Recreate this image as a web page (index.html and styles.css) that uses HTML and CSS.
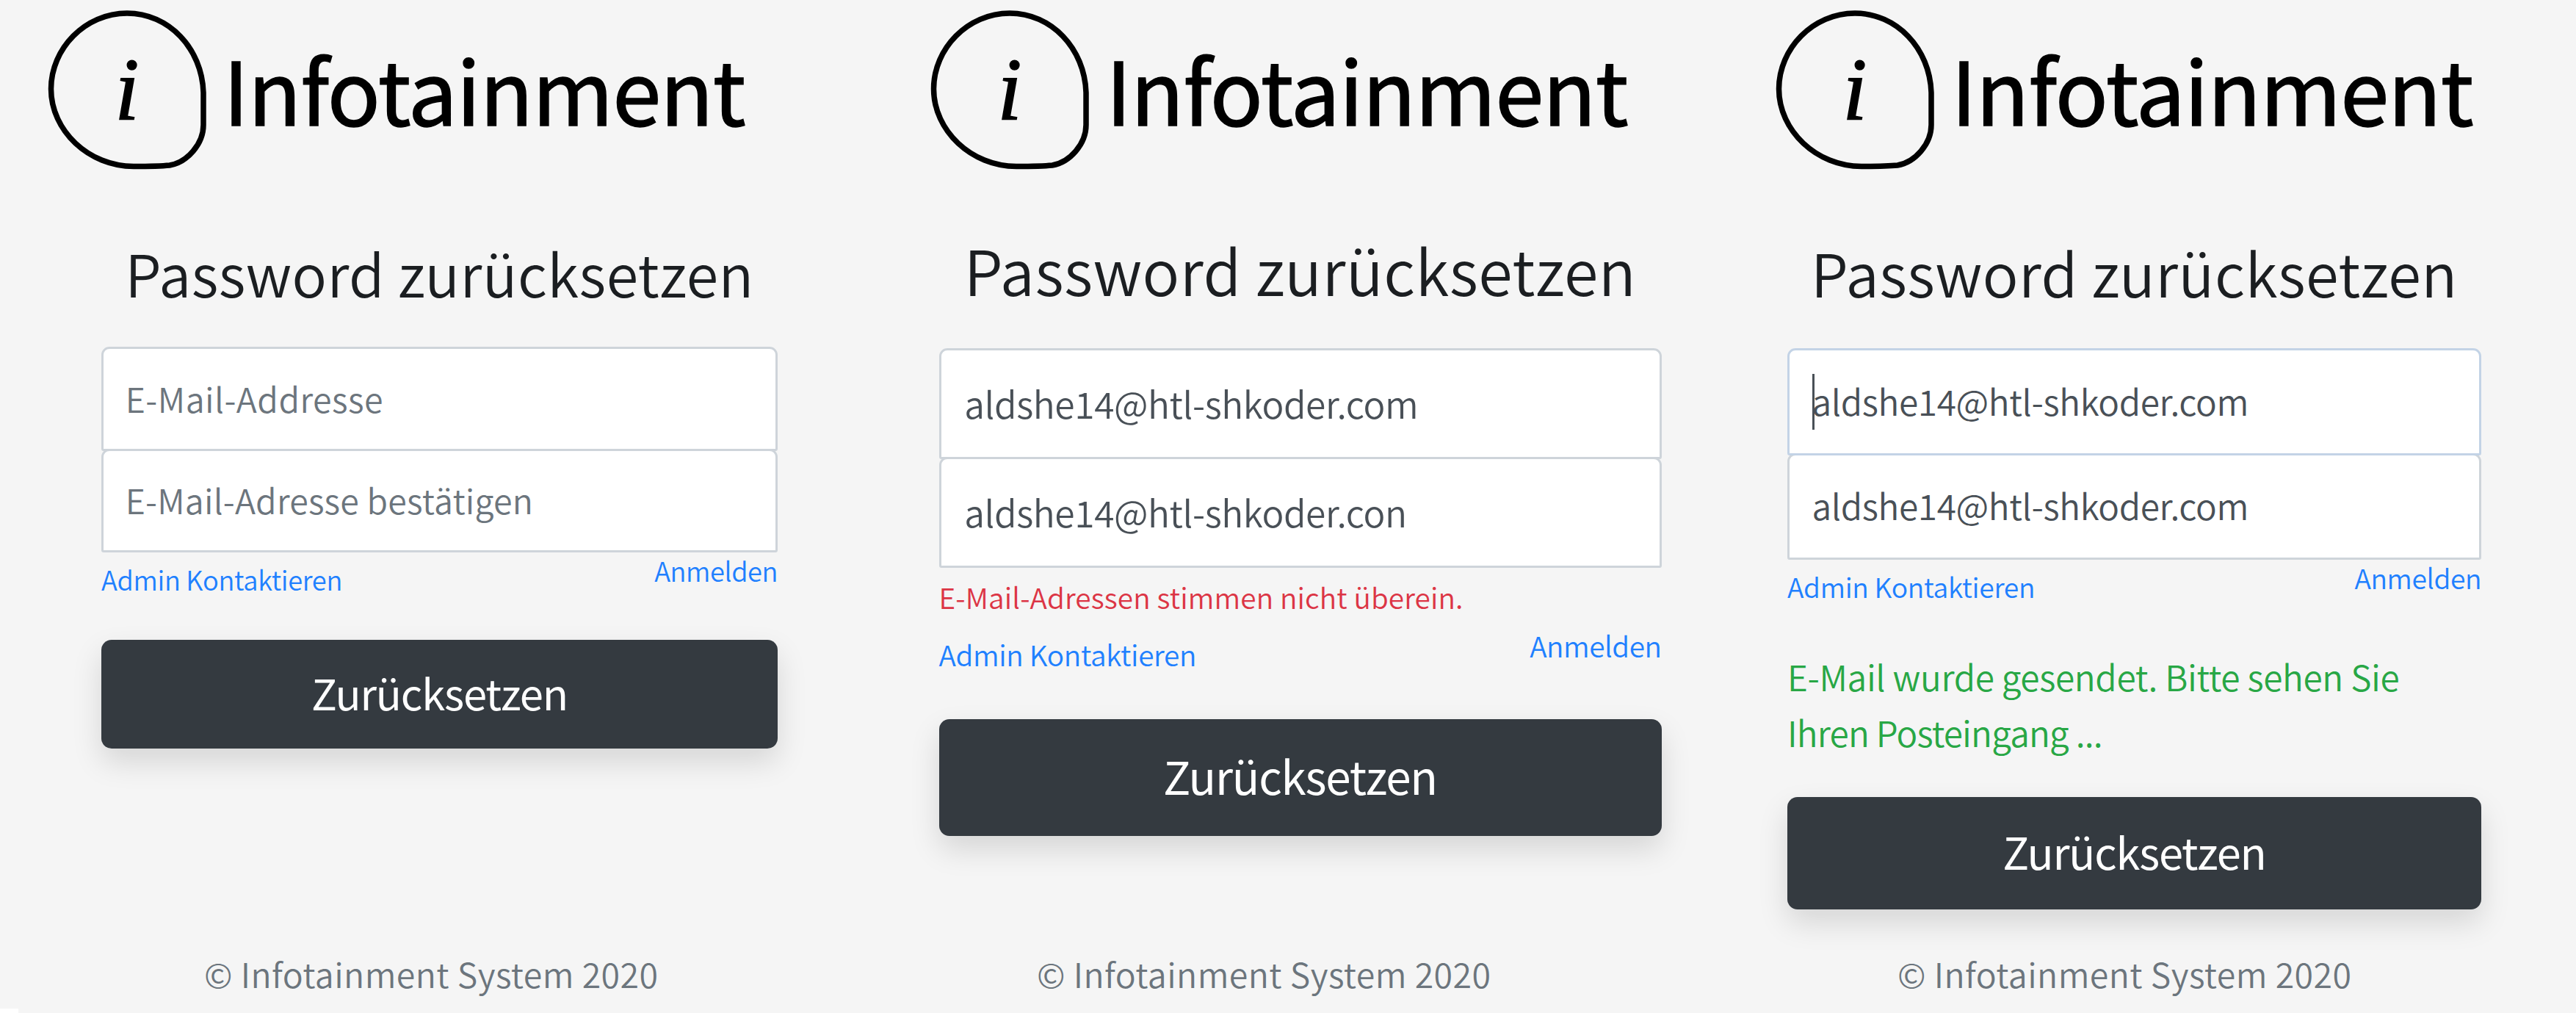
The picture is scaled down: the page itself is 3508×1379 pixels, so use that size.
FILE: index.html
```html
<!DOCTYPE html>
<html lang="de">
<head>
<meta charset="utf-8">
<title>Infotainment – Password zurücksetzen</title>
<link rel="stylesheet" href="styles.css">
</head>
<body>
<svg class="defs" aria-hidden="true">
  <symbol id="ring" viewBox="0 0 224 224">
    <path d="M214 116C212 56 167 8 110 8C53 8 6.500 56 6.500 111C6.500 168 58 216.500 119 216.500C142 216.500 153 216.500 168 215C192 211 214 186 214 160Z" fill="none" stroke="#000" stroke-width="7.500"/>
  </symbol>
</svg>
<main class="screens">
  <section class="panel panel-empty">
    <header class="logo">
      <span class="mark"><svg class="ring"><use href="#ring"/></svg><span class="mark-i">i</span></span>
      <span class="wordmark">Infotainment</span>
    </header>
    <form class="form">
      <h1 class="title">Password zurücksetzen</h1>
      <div class="field placeholder">E-Mail-Addresse</div>
      <div class="field placeholder confirm">E-Mail-Adresse bestätigen</div>
      <nav class="links"><a class="link contact">Admin Kontaktieren</a><a class="link">Anmelden</a></nav>
      <button class="submit" type="button">Zurücksetzen</button>
    </form>
    <footer class="footer">© Infotainment System 2020</footer>
  </section>
  <section class="panel panel-error">
    <header class="logo">
      <span class="mark"><svg class="ring"><use href="#ring"/></svg><span class="mark-i">i</span></span>
      <span class="wordmark">Infotainment</span>
    </header>
    <form class="form">
      <h1 class="title">Password zurücksetzen</h1>
      <div class="field">aldshe14@htl-shkoder.com</div>
      <div class="field">aldshe14@htl-shkoder.con</div>
      <p class="error">E-Mail-Adressen stimmen nicht überein.</p>
      <nav class="links"><a class="link contact">Admin Kontaktieren</a><a class="link">Anmelden</a></nav>
      <button class="submit" type="button">Zurücksetzen</button>
    </form>
    <footer class="footer">© Infotainment System 2020</footer>
  </section>
  <section class="panel panel-success">
    <header class="logo">
      <span class="mark"><svg class="ring"><use href="#ring"/></svg><span class="mark-i">i</span></span>
      <span class="wordmark">Infotainment</span>
    </header>
    <form class="form">
      <h1 class="title">Password zurücksetzen</h1>
      <div class="field focused">aldshe14@htl-shkoder.com</div>
      <div class="field">aldshe14@htl-shkoder.com</div>
      <nav class="links"><a class="link contact">Admin Kontaktieren</a><a class="link">Anmelden</a></nav>
      <p class="success">E-Mail wurde gesendet. Bitte sehen Sie<br><span class="success-end">Ihren Posteingang ...</span></p>
      <button class="submit" type="button">Zurücksetzen</button>
    </form>
    <footer class="footer">© Infotainment System 2020</footer>
  </section>
</main>
</body>
</html>
```
FILE: styles.css
```css
* { box-sizing: border-box; }

body {
  margin: 0;
  background: #f5f5f5;
  color: #1b1e21;
  font-family: "Noto Sans CJK JP", "Open Sans", sans-serif;
  font-weight: 350;
}

.defs { display: block; width: 0; height: 0; }

.screens {
  display: grid;
  grid-template-columns: 1200px 1153px 1155px;
  height: 1379px;
}

.panel {
  display: flex;
  flex-direction: column;
  height: 1379px;
}

/* each form is shown at its own zoom level */
.panel-empty {
  --size: 46.5px; --left: 138px; --width: 921px; --title-top: 320.5px; --title-gap: 51.5px;
  --field: 141.5px; --button: 148px; --button-gap: 60px; --footer-left: 278px;
}
.panel-error {
  --size: 49.7px; --left: 78.5px; --width: 984px; --title-top: 316px; --title-gap: 58px;
  --field: 151px; --button: 158.5px; --button-gap: 66px; --footer-left: 212px;
}
.panel-success {
  --size: 47.8px; --left: 81px; --width: 945px; --title-top: 319.5px; --title-gap: 54.5px;
  --field: 145.5px; --button: 152.5px; --button-gap: 51px; --footer-left: 231px;
}

.logo {
  display: flex;
  align-items: flex-start;
  height: 240px;
  padding: 10px 0 0 63px;
}
.panel-error .logo { padding-left: 65px; }
.mark {
  display: grid;
  width: 224px;
  height: 224px;
  place-items: center;
}
.ring, .mark-i { grid-area: 1 / 1; }
.ring { width: 224px; height: 224px; }
.mark-i {
  padding-right: 4px;
  color: #000;
  font: italic 400 120px/1 "Liberation Serif", serif;
  -webkit-text-stroke: 1.5px #000;
}
.wordmark {
  margin-left: 17px;
  color: #000;
  font-size: 119px;
  font-weight: 400;
  letter-spacing: -1px;
  line-height: 218px;
  -webkit-text-stroke: 1.5px #000;
}

.form {
  width: var(--width);
  margin: calc(var(--title-top) - 240px) 0 0 var(--left);
  font-size: var(--size);
}
.title {
  margin: 0 0 var(--title-gap);
  font-size: 1.698em;
  font-weight: 350;
  letter-spacing: 0.006em;
  line-height: 100px;
  text-align: center;
  white-space: nowrap;
}
.field {
  display: flex;
  position: relative;
  align-items: center;
  height: var(--field);
  padding: 0 0.64em 3px;
  border: 3px solid #ced4da;
  border-radius: 11px 11px 3px 3px;
  background: #fff;
  color: #495057;
  letter-spacing: -0.008em;
  white-space: nowrap;
}
.field + .field { margin-top: -3px; }
.placeholder { color: #6c757d; letter-spacing: 0.01em; }
.confirm { letter-spacing: 0.004em; }
.focused { z-index: 1; border-color: #c3d3e6; }
.focused::before {
  position: absolute;
  top: 32px;
  left: 31px;
  width: 3px;
  height: 76px;
  background: #495057;
  content: "";
}
.error {
  margin: 16px 0 0;
  color: #dc3545;
  font-size: 0.78em;
  letter-spacing: 0.003em;
  line-height: 46px;
}
.links {
  display: flex;
  align-items: flex-start;
  justify-content: space-between;
  padding-top: 1px;
}
.error + .links { margin-top: 19px; }
.link {
  color: #2080ff;
  font-size: 0.78em;
  letter-spacing: -0.012em;
  line-height: 46px;
}
.contact { padding-top: 12px; letter-spacing: -0.009em; }
.success {
  margin: 62px 0 0;
  color: #28a745;
  letter-spacing: -0.008em;
  line-height: 75.5px;
  white-space: nowrap;
}
.success-end { letter-spacing: -0.018em; }
.submit {
  display: flex;
  align-items: center;
  justify-content: center;
  width: 100%;
  height: var(--button);
  margin: var(--button-gap) 0 0;
  padding: 0 0 7px;
  border: 0;
  border-radius: 14px;
  background: #343a40;
  box-shadow: 0 18px 40px rgba(0, 0, 0, 0.13);
  color: #fff;
  font-family: inherit;
  font-size: 1.247em;
  font-weight: 400;
  letter-spacing: -0.02em;
}
.footer {
  margin: auto 0 24px var(--footer-left);
  color: #6c757d;
  font-size: 46.5px;
  letter-spacing: 0.009em;
  line-height: 60px;
}

/* white notch in the lower left corner */
.panel-empty::after {
  align-self: flex-start;
  width: 25px;
  height: 6px;
  margin-top: -6px;
  background: #fff;
  content: "";
}
```
